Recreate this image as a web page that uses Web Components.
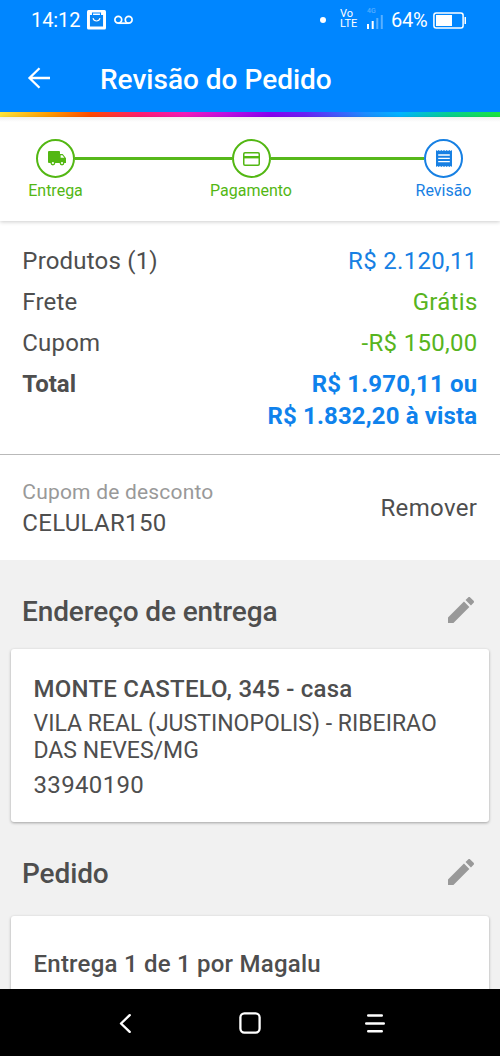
<!DOCTYPE html>
<html lang="pt-BR">
<head>
<meta charset="utf-8">
<title>Revisão do Pedido</title>
<style>
  body { margin: 0; width: 500px; height: 1056px; overflow: hidden; background: #fff; font-family: Roboto, "Liberation Sans", sans-serif; color: #4e4e4e; }
</style>
</head>
<body>
<order-review></order-review>
<script>
const define = (name, html) => customElements.define(name, class extends HTMLElement {
  constructor() {
    super();
    const t = document.createElement('template');
    t.innerHTML = html;
    this.attachShadow({ mode: 'open' }).append(t.content.cloneNode(true));
  }
});

define('status-bar', `
<style>
  :host { display: flex; align-items: center; height: 40px; box-sizing: border-box; padding: 0 33px 0 31px; color: #fff; font-size: 20px; line-height: 40px; }
  .clock { width: 56px; letter-spacing: -.1px; white-space: nowrap; }
  svg { display: block; flex: none; }
  .vo { width: 20px; margin: -2px 7px 0 14px; font-size: 11px; line-height: 10px; }
  .vo span { display: block; height: 10px; }
  .dot { margin-left: auto; width: 6px; height: 6px; border-radius: 50%; background: #fff; }
  .sig { width: 18px; margin-top: -4px; }
  .net { font-size: 7px; line-height: 8px; height: 8px; color: #55adff; font-weight: 500; }
  .pct { margin: 0 5px 0 6px; width: 37px; letter-spacing: -.2px; white-space: nowrap; }
</style>
<span class="clock">14:12</span>
<svg width="19" height="20" viewBox="0 0 19 20"><rect width="19" height="19.5" rx="1.5" fill="#fff"/><path d="M3.5 5.5h12V16h-12zM5.5 5V3h8v2" fill="none" stroke="#0086ff" stroke-width="1.1"/><path d="M3.5 6h12v10h-12z" fill="#0a84f0"/><path d="M6 8.2a3.6 3.6 0 0 0 7 0" fill="none" stroke="#fff" stroke-width="1.1"/></svg>
<svg width="19" height="10" viewBox="0 0 19 10" style="margin-left:8px" fill="none" stroke="#fff" stroke-width="1.7"><circle cx="4.3" cy="4.8" r="3.4"/><circle cx="14.7" cy="4.8" r="3.4"/><path d="M4.3 8.2h10.4"/></svg>
<i class="dot"></i>
<div class="vo"><span>Vo</span><span>LTE</span></div>
<div class="sig"><div class="net">4G</div><svg width="16" height="14" viewBox="0 0 16 14" fill="#fff"><path d="M0 9h2v5H0zM4.7 6h2v8h-2z"/><path opacity=".35" d="M9.3 3h2v11h-2zM13.8 0h2v14h-2z"/></svg></div>
<span class="pct">64%</span>
<svg width="34" height="17" viewBox="0 0 34 17"><rect x=".9" y=".9" width="29.2" height="15.2" rx="2.3" fill="none" stroke="#fff" stroke-width="1.5"/><path d="M3 3h16v11H3zM31.5 5H33v7h-1.500z" fill="#fff"/></svg>
`);

define('app-header', `
<style>
  :host { display: block; background: #0086ff; }
  .bar { display: flex; align-items: center; height: 72px; padding: 5px 0 0 27px; box-sizing: border-box; color: #fff; }
  h1 { margin: 2px 0 0 50px; font-size: 28px; font-weight: 500; line-height: 36px; letter-spacing: 0; white-space: nowrap; }
  svg { display: block; margin-top: -1px; }
  .rainbow { height: 5px; background: linear-gradient(90deg, #ffe53b 0, #ff9a00 50px, #ff4b00 90px, #ff1e6e 140px, #f31ab8 185px, #c010e0 225px, #8800f0 270px, #6a20f5 305px, #1d8cff 365px, #00b4ff 400px, #08cf8f 450px, #1be43e 500px); }
</style>
<status-bar></status-bar>
<div class="bar">
  <svg width="23" height="22" viewBox="0 0 23 22" fill="none" stroke="#fff" stroke-width="2.3"><path d="M23 11H3M12.500 1.200L2.500 11l10 9.800"/></svg>
  <h1><slot></slot></h1>
</div>
<div class="rainbow"></div>
`);

define('progress-step', `
<style>
  :host { display: flex; flex-direction: column; align-items: center; width: 39px; }
  .ring { width: 39px; height: 39px; box-sizing: border-box; border: 2px solid currentColor; border-radius: 50%; display: grid; place-items: center; flex: none; }
  .label { font-size: 16px; line-height: 20px; margin-top: 3px; white-space: nowrap; }
</style>
<div class="ring"><slot name="icon"></slot></div>
<div class="label"><slot></slot></div>
`);

define('progress-steps', `
<style>
  :host { display: flex; align-items: flex-start; height: 104px; box-sizing: border-box; padding: 22px 37px 0 36px; color: #53b713; background: linear-gradient(#f0f0f0, #fff 5px); box-shadow: 0 1px 4px #0003; position: relative; }
  .line { height: 3px; margin-top: 18px; background: #57b81b; }
  .a { width: 156.500px; } .b { width: 153.500px; }
  .now { color: #1780e3; }
  svg { display: block; }
</style>
<progress-step>
  <svg slot="icon" width="18" height="15" viewBox="0 0 18 15" fill="currentColor" style="margin-left:2px"><path d="M1 0h10a1 1 0 0 1 1 1v2h2.700L18 7.200V12h-1.800a2.300 2.300 0 0 1-4.400 0H7.100a2.300 2.300 0 0 1-4.400 0H1a1 1 0 0 1-1-1V1a1 1 0 0 1 1-1z"/><path d="M12.600 4.200h1.800l1.900 2.500h-3.700z" fill="#fff"/><circle cx="4.900" cy="12" r="2.400"/><circle cx="14" cy="12" r="2.400"/><circle cx="4.900" cy="12" r="1.100" fill="#fff"/><circle cx="14" cy="12" r="1.100" fill="#fff"/></svg>
  Entrega
</progress-step>
<div class="line a"></div>
<progress-step>
  <svg slot="icon" width="17" height="14" viewBox="0 0 17 14" fill="none" stroke="currentColor" stroke-width="1.500"><rect x=".75" y=".75" width="15.500" height="12.500" rx="1.200"/><path d="M1 5.200h15" stroke-width="2.400"/></svg>
  Pagamento
</progress-step>
<div class="line b"></div>
<progress-step class="now">
  <svg slot="icon" width="16" height="17" viewBox="0 0 16 17" fill="currentColor"><path d="M0 0l1.330 1L2.660 0 4 1l1.330-1 1.330 1L8 0l1.330 1 1.330-1L12 1l1.330-1 1.330 1L16 0v17l-1.330-1-1.330 1L12 16l-1.330 1-1.330-1L8 17l-1.330-1-1.330 1L4 16l-1.330 1-1.330-1L0 17z"/><path d="M2.200 5h11.600M2.200 8.300h11.600M2.200 11.600h11.600" stroke="#fff" stroke-width="1.300"/></svg>
  Revisão
</progress-step>
`);

define('summary-row', `
<style>
  :host { display: flex; justify-content: space-between; font-size: 24px; line-height: 32.500px; margin-bottom: 8.500px; letter-spacing: .2px; }
  .value { text-align: right; color: var(--value, #1780e3); letter-spacing: .3px; margin-right: -.3px; }
  :host([total]) { font-weight: 700; margin-bottom: 0; letter-spacing: 0; }
  :host([total]) .value { letter-spacing: .14px; margin-right: 0; }
</style>
<span><slot name="label"></slot></span><span class="value"><slot></slot></span>
`);

define('order-summary', `
<style>
  :host { display: block; box-sizing: border-box; height: 234px; padding: 23.500px 22.700px 0 22.300px; border-bottom: 1px solid #b9b9b9; }
  .ok { --value: #57b420; }
  .sum { --value: #0f82ec; }
</style>
<summary-row><span slot="label">Produtos (1)</span>R$ 2.120,11</summary-row>
<summary-row class="ok"><span slot="label">Frete</span>Grátis</summary-row>
<summary-row class="ok"><span slot="label">Cupom</span>-R$ 150,00</summary-row>
<summary-row class="sum" total><span slot="label">Total</span>R$ 1.970,11 ou<br>R$ 1.832,20 à vista</summary-row>
`);

define('coupon-panel', `
<style>
  :host { display: flex; justify-content: space-between; align-items: center; height: 105px; box-sizing: border-box; padding: 0 22.700px 0 22.300px; font-size: 24px; line-height: 32px; }
  .cap { color: #999; font-size: 21px; line-height: 30px; letter-spacing: .2px; }
  .code { letter-spacing: .3px; }
  .act { letter-spacing: .35px; }
</style>
<div><div class="cap">Cupom de desconto</div><div class="code">CELULAR150</div></div>
<div class="act">Remover</div>
`);

define('section-title', `
<style>
  :host { display: flex; justify-content: space-between; align-items: center; height: 36px; padding: 0 26px 0 22px; }
  h2 { margin: 2px 0 0; font-size: 28px; line-height: 36px; font-weight: 500; letter-spacing: -.11px; }
  svg { display: block; margin-top: -3px; }
</style>
<h2><slot></slot></h2>
<svg width="26" height="26" viewBox="3 2.990 18 18" fill="#999"><path d="M3 17.250V21h3.750L17.810 9.940l-3.750-3.750L3 17.250zM20.710 7.040c.39-.39.39-1.020 0-1.410l-2.340-2.340c-.39-.39-1.020-.39-1.410 0l-1.830 1.830 3.750 3.750 1.830-1.830z"/></svg>
`);

define('info-card', `
<style>
  :host { display: block; box-sizing: border-box; margin: 0 11px; padding: 0 22.500px; border-radius: 3px; background: #fff; box-shadow: 0 1px 3px #0005; font-size: 24px; }
</style>
<slot></slot>
`);

define('system-nav', `
<style>
  :host { display: flex; height: 67px; box-sizing: border-box; padding: 0 62.500px; background: #000; justify-content: space-around; align-items: center; position: relative; }
  svg { display: block; }
</style>
<svg width="22" height="22" viewBox="0 0 22 22" fill="none" stroke="#fff" stroke-width="2.400" stroke-linecap="round" stroke-linejoin="round"><path d="M15.700 3.200L7 11.500l8.700 8.300"/></svg>
<svg width="22" height="22" viewBox="0 0 22 22" fill="none" stroke="#fff" stroke-width="2.300"><rect x="1.400" y="1.400" width="19.200" height="19.200" rx="4"/></svg>
<svg width="22" height="22" viewBox="0 0 22 22" fill="none" stroke="#fff" stroke-width="2.400" stroke-linecap="round"><path d="M4.200 3.500h13.600M2.200 11.500h17.600M4.200 19.300h13.600"/></svg>
`);

define('order-review', `
<style>
  :host { display: flex; flex-direction: column; height: 1056px; overflow: hidden; }
  :host > * { flex: none; }
  main { height: 429px; background: #f1f1f1; overflow: hidden; box-sizing: border-box; padding-top: 33px; }
  .addr { height: 173px; margin-top: 20px; padding-top: 24px; }
  .order { height: 120px; margin-top: 25px; padding-top: 32px; }
  .pedido { margin-top: 33px; }
  b { display: block; font-weight: 500; line-height: 32px; letter-spacing: .23px; }
  p { margin: 0; }
  .place { line-height: 27px; font-size: 23px; margin-top: 5px; }
  .zip { line-height: 32px; margin-top: 5px; letter-spacing: .35px; }
</style>
<app-header>Revisão do Pedido</app-header>
<progress-steps></progress-steps>
<order-summary></order-summary>
<coupon-panel></coupon-panel>
<main>
  <section-title>Endereço de entrega</section-title>
  <info-card class="addr"><b>MONTE CASTELO, 345 - casa</b><p class="place">VILA REAL (JUSTINOPOLIS) - RIBEIRAO<br>DAS NEVES/MG</p><p class="zip">33940190</p></info-card>
  <section-title class="pedido">Pedido</section-title>
  <info-card class="order"><b>Entrega 1 de 1 por Magalu</b></info-card>
</main>
<system-nav></system-nav>
`);
</script>
</body>
</html>
